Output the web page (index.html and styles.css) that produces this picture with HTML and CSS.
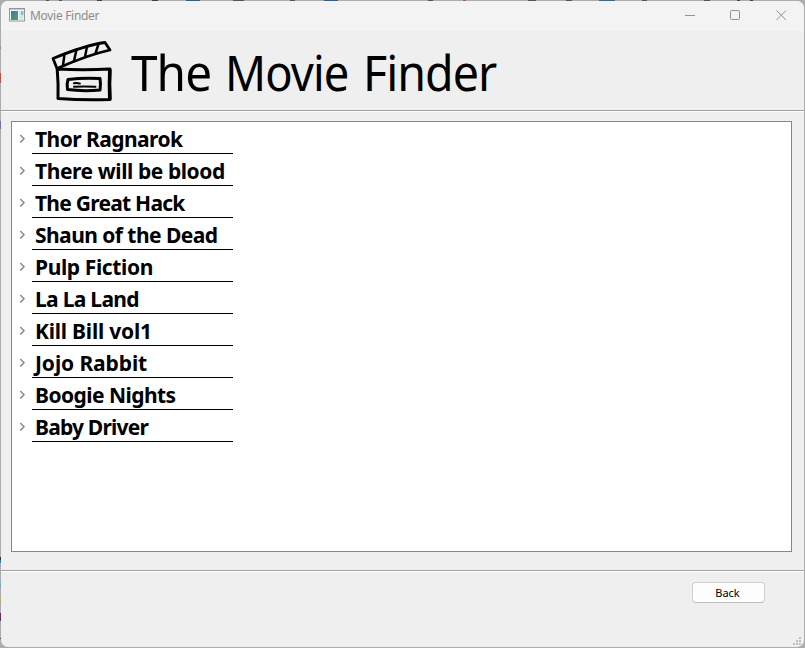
FILE: index.html
```html
<!DOCTYPE html>
<html lang="en">
<head>
<meta charset="utf-8">
<title>Movie Finder</title>
<link rel="stylesheet" href="styles.css">
</head>
<body>
<div class="window">
  <div class="titlebar">
    <svg class="app-icon" width="16" height="14" viewBox="0 0 16 14">
      <defs><linearGradient id="g" x1="0" y1="0" x2="1" y2="1"><stop offset="0" stop-color="#3d78a8"/><stop offset="1" stop-color="#4fa46b"/></linearGradient></defs>
      <rect x=".5" y=".5" width="15" height="12.500" fill="#f5f7f8" stroke="#92979b"/>
      <path d="M1 1.500h14" stroke="#c3c8cc"/>
      <rect x="2" y="3" width="7" height="9" fill="url(#g)"/>
      <rect x="10" y="3" width="2" height="9" fill="#d6e6ee"/>
      <rect x="12" y="3" width="2.500" height="4" fill="#91b6c6"/>
      <rect x="12" y="7" width="2.500" height="5" fill="#d5e7dd"/>
    </svg>
    <span class="caption">Movie Finder</span>
    <svg class="controls" width="104" height="12" viewBox="0 0 104 12" fill="none" stroke="#929292">
      <path d="M0 6.500h10"/>
      <rect x="45.500" y="1.500" width="9" height="9" rx="1"/>
      <path d="M91.500 1.500l9.500 9.500M101 1.500L91.500 11"/>
    </svg>
  </div>
  <header class="header">
    <svg class="clapper" width="64" height="64" viewBox="0 0 64 64" fill="none" stroke="#000" stroke-linecap="round" stroke-linejoin="round">
      <path stroke-width="2.800" d="M3 18.500C20 11.500 37 5 55 2.500L60 10C42 14 24 21 7 28.500Z"/>
      <path stroke-width="2.500" d="M14.500 14L13 25.500M26.500 9.500L24 21M37 6.500L35 17M48.500 4L45.500 13.500"/>
      <path stroke-width="3" d="M7.200 29Q33 30.500 60 29Q59 44 60 59.500Q34 60.500 8 58.500Q8.500 44 7.200 29Z"/>
      <path stroke-width="3.600" d="M59.800 30.500Q59.200 44 59.800 58.500"/>
      <path stroke-width="3" d="M18 39.500Q33 37.500 50 38.500Q51 44 50 50Q33 51.500 17.500 49.500Q16.500 44 18 39.500Z"/>
      <path stroke-width="2" d="M24 43.300Q27 42.800 30 43.600M24 46.700Q34 46.300 45.500 46.700"/>
    </svg>
    <h1 class="title"><span class="w1">The</span> <span class="w2">Movie</span> <span class="w3">Finder</span></h1>
  </header>
  <main class="content">
    <ul class="tree">
      <li><svg class="chev" width="7" height="10" viewBox="0 0 7 10"><path d="M1.300 1l3.700 3.700-3.700 3.700"/></svg><span class="name"><b class="n1">Thor Ragnarok</b></span></li>
      <li><svg class="chev" width="7" height="10" viewBox="0 0 7 10"><path d="M1.300 1l3.700 3.700-3.700 3.700"/></svg><span class="name"><b class="n2">There will be blood</b></span></li>
      <li><svg class="chev" width="7" height="10" viewBox="0 0 7 10"><path d="M1.300 1l3.700 3.700-3.700 3.700"/></svg><span class="name"><b class="n3">The Great Hack</b></span></li>
      <li><svg class="chev" width="7" height="10" viewBox="0 0 7 10"><path d="M1.300 1l3.700 3.700-3.700 3.700"/></svg><span class="name"><b class="n4">Shaun of the Dead</b></span></li>
      <li><svg class="chev" width="7" height="10" viewBox="0 0 7 10"><path d="M1.300 1l3.700 3.700-3.700 3.700"/></svg><span class="name"><b class="n5">Pulp Fiction</b></span></li>
      <li><svg class="chev" width="7" height="10" viewBox="0 0 7 10"><path d="M1.300 1l3.700 3.700-3.700 3.700"/></svg><span class="name"><b class="n6">La La Land</b></span></li>
      <li><svg class="chev" width="7" height="10" viewBox="0 0 7 10"><path d="M1.300 1l3.700 3.700-3.700 3.700"/></svg><span class="name"><b class="n7">Kill Bill vol1</b></span></li>
      <li><svg class="chev" width="7" height="10" viewBox="0 0 7 10"><path d="M1.300 1l3.700 3.700-3.700 3.700"/></svg><span class="name"><b class="n8">Jojo Rabbit</b></span></li>
      <li><svg class="chev" width="7" height="10" viewBox="0 0 7 10"><path d="M1.300 1l3.700 3.700-3.700 3.700"/></svg><span class="name"><b class="n9">Boogie Nights</b></span></li>
      <li><svg class="chev" width="7" height="10" viewBox="0 0 7 10"><path d="M1.300 1l3.700 3.700-3.700 3.700"/></svg><span class="name"><b class="n10">Baby Driver</b></span></li>
    </ul>
  </main>
  <footer class="footer">
    <button class="back">Back</button>
    <svg class="grip" width="8" height="8" viewBox="0 0 8 8" fill="#bdbdbd"><path d="M6 0h2v2h-2zM3 3h2v2h-2zM6 3h2v2h-2zM0 6h2v2h-2zM3 6h2v2h-2zM6 6h2v2h-2z"/></svg>
  </footer>
</div>
</body>
</html>
```
FILE: styles.css
```css
* { box-sizing: border-box; }
/* Slivers of the desktop show through the window's transparent 1px border. */
body {
  margin: 0; height: 648px; overflow: hidden;
  background:
    linear-gradient(90deg, transparent 46px, #555 46px 49px, transparent 49px 59px, #555 59px 62px, transparent 62px 97px, #444 97px 102px, transparent 102px 152px, #444 152px 158px, transparent 158px 186px, #2563a8 186px 200px, transparent 200px 233px, #555 233px 244px, transparent 244px 290px, #555 290px 295px, transparent 295px 324px, #2563a8 324px 338px, transparent 338px 428px, #555 428px 433px, transparent 433px 463px, #d04a68 463px 466px, transparent 466px 528px, #555 528px 536px, transparent 536px 566px, #555 566px 572px, transparent 572px 599px, #2a6a9c 599px 615px, transparent 615px 642px, #555 642px 647px, transparent 647px 704px, #555 704px 710px, transparent 710px 737px, #444 737px 740px, transparent 740px 750px, #444 750px 753px, transparent 753px) 0 0 / 805px 1px no-repeat,
    linear-gradient(transparent 46px, #b89a62 46px 47px, #8b86b8 47px 49px, transparent 49px 73px, #c84c48 73px 83px, transparent 83px 121px, #7a6cb8 121px 129px, transparent 129px 557px, #333 557px 560px, #2e7ab8 560px 563px, transparent 563px 583px, #78a9c2 583px 588px, transparent 588px 599px, #b8a860 599px 604px, transparent 604px 613px, #6d2c58 613px 621px, transparent 621px 638px, #444 638px 639px, transparent 639px) 0 0 / 1px 648px no-repeat,
    #acacae;
}
.window {
  width: 805px; height: 648px;
  display: flex; flex-direction: column;
  border: 1px solid transparent; border-radius: 8px;
  background: #efefef padding-box; overflow: hidden;
  font-family: "Noto Sans", sans-serif; color: #000;
}
.titlebar { height: 30px; flex: none; display: flex; align-items: center; padding: 0 15px 0 8px; background: #f3f3f3; }
.app-icon { margin-top: -2px; }
.caption { margin-left: 5px; font-size: 12px; line-height: 16px; color: #8c8c8c; letter-spacing: -0.3px; }
.controls { margin: -2px 0 0 auto; }
.header {
  height: 81px; flex: none; display: flex; align-items: flex-start;
  padding: 9px 0 0 49px;
  border-bottom: 1px solid #fff; box-shadow: inset 0 -1px #a0a0a0;
}
.title { margin: -2px 0 0 17px; font-size: 49px; line-height: 68px; font-weight: 400; white-space: nowrap; display: flex; letter-spacing: -1px; }
.title span { flex: none; transform-origin: 0 50%; }
.w1 { width: 94px; transform: scaleX(.975); }
.w2 { width: 138px; transform: scaleX(.925); }
.w3 { transform: scaleX(.95); }
.content { height: 458px; flex: none; padding: 9px 12px 18px 10px; }
.tree { height: 431px; margin: 0; padding: 0; list-style: none; background: #fff; border: 1px solid #828790; }
.tree li { height: 32px; display: flex; align-items: flex-start; padding-left: 6.500px; }
.chev { margin-top: 12px; fill: none; stroke: #8b8b8b; stroke-width: 1.5; }
.name { width: 201px; height: 32px; margin-left: 6.500px; padding-left: 3px; border-bottom: 1px solid #000; font-size: 21px; line-height: 35px; white-space: nowrap; }
.n1, .n4, .n9 { letter-spacing: -0.55px; }
.n2 { letter-spacing: -0.42px; }
.n3 { letter-spacing: -0.75px; }
.n5 { letter-spacing: -0.38px; }
.n6 { letter-spacing: -0.7px; }
.n7 { letter-spacing: -0.22px; }
.n8 { letter-spacing: -0.1px; }
.n10 { letter-spacing: -0.8px; }
.footer {
  height: 77px; display: flex; align-items: flex-start; justify-content: flex-end;
  padding: 12px 3px 0 0; border-top: 1px solid #a0a0a0; box-shadow: inset 0 1px #fff;
}
.back {
  width: 73px; height: 21px; margin: -1px 28px 0 0; padding: 0 2px 0 0;
  border: 1px solid #d0d0d0; border-bottom-color: #bcbcbc; border-radius: 4px;
  background: #fdfdfd; color: #000; font: 11px/18px "Noto Sans", sans-serif;
}
.grip { align-self: flex-end; margin-bottom: 2px; }
```
